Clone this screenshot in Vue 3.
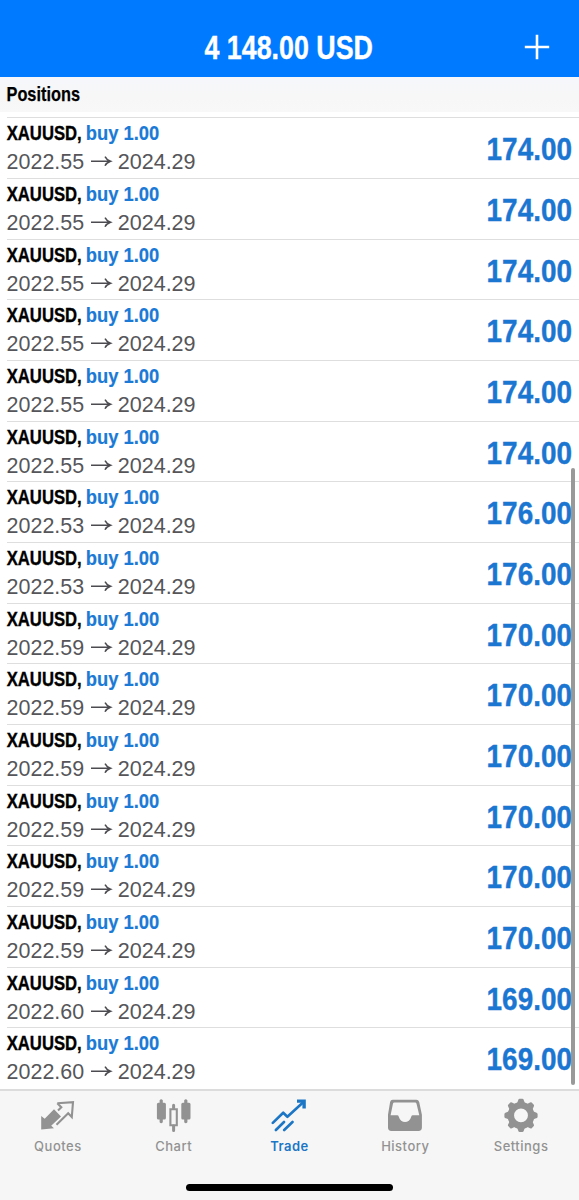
<script setup>
const entries = [
  ...Array(6).fill(['2022.55', '174.00']),
  ...Array(2).fill(['2022.53', '176.00']),
  ...Array(6).fill(['2022.59', '170.00']),
  ...Array(2).fill(['2022.60', '169.00']),
]
const positions = entries.map(([open, profit], id) => ({ id, open, profit, current: '2024.29' }))
</script>

<template>
  <div class="app">
    <header class="header">
      <svg class="title" width="579" height="77">
        <text x="204.5" y="59" textLength="168.5" lengthAdjust="spacingAndGlyphs">4 148.00 USD</text>
      </svg>
      <svg class="plus" width="26" height="26" viewBox="0 0 26 26">
        <path d="M13 .8V25.2M.8 13H25.2" />
      </svg>
    </header>
    <div class="section">
      <svg width="200" height="35">
        <text x="6.5" y="24.4" textLength="73.5" lengthAdjust="spacingAndGlyphs">Positions</text>
      </svg>
    </div>
    <main class="list">
      <div v-for="p in positions" :key="p.id" class="row">
        <svg class="info" width="220" height="59">
          <text class="symbol" transform="translate(-.3 22.3) scale(.794 1)">XAUUSD,</text>
          <text class="side" transform="translate(78.8 22.3) scale(.875 1)">buy 1.00</text>
          <text class="price" transform="translate(-.4 51) scale(.975 1)">{{ p.open }}</text>
          <path class="arrow" d="M84 43.2H103M98 38.6Q99.5 41.8 103.5 43.2Q99.5 44.6 98 47.8" />
          <text class="price" transform="translate(110.7 51) scale(.98 1)">{{ p.current }}</text>
        </svg>
        <svg class="profit" width="110" height="59">
          <text transform="translate(17.6 42.2) scale(.9 1)">{{ p.profit }}</text>
        </svg>
      </div>
      <div class="scrollbar"></div>
    </main>
    <nav class="tabs">
      <div class="tab">
        <svg width="36" height="36" viewBox="0 0 36 36">
          <path class="fill" d="M1.2 31.5V18L4.7 20.8L14 11.3L21 18.5L11.2 27.8L14 30.2Z" />
          <path class="line" d="M17.3 5.2L33 4.2L31.8 19L28.2 15.2L16.5 26.8M17.3 5.2L21.3 9.2L18 12.4" />
        </svg>
        <span>Quotes</span>
      </div>
      <div class="tab">
        <svg width="36" height="36" viewBox="0 0 36 36">
          <path class="fill" d="M.9 6.2Q.9 4.7 2.4 4.7H3.6V2.2Q5.2.4 6.8 2.2V4.7H8.4Q9.9 4.7 9.9 6.2V20Q9.9 21.5 8.4 21.5H6.8V24.3Q5.2 26.3 3.6 24.3V21.5H2.4Q.9 21.5 .9 20ZM25.3 6.2Q25.3 4.7 26.8 4.7H28.2V2.2Q29.8.4 31.4 2.2V4.7H33Q34.5 4.7 34.5 6.2V20Q34.5 21.5 33 21.5H31.4V24.3Q29.8 26.3 28.2 24.3V21.5H26.8Q25.3 21.5 25.3 20Z" />
          <path class="line" d="M14.4 11.3H20.8V27.2H14.4Z" />
          <path class="wick" d="M17.6 7.2V10M17.6 28V32.4" />
        </svg>
        <span>Chart</span>
      </div>
      <div class="tab active">
        <svg width="36" height="36" viewBox="0 0 36 36">
          <path class="trend" d="M1.8 24.9L12.2 14.7L16.4 18.8L32.2 4.2M4.9 32L13 24M13.2 32L21.5 24" />
          <path class="fill" d="M26 1.4H34.8V10.5H31.4V4.8H26Z" />
        </svg>
        <span>Trade</span>
      </div>
      <div class="tab">
        <svg width="36" height="36" viewBox="0 0 36 36">
          <path class="fill" fill-rule="evenodd" d="M5.7 1.8H29.3Q31.5 1.8 32.2 4.1L34.9 16.8V29.5Q34.9 32.9 31.5 32.9H4.4Q1 32.9 1 29.5V16.8L3.1 4.1Q3.6 1.8 5.7 1.8ZM7.4 4.6Q6.2 4.6 5.9 5.9L3.6 17.3H10.2Q11.4 17.3 11.8 18.7C13.5 25.8 22.6 25.8 24.2 18.7Q24.6 17.3 25.8 17.3H32.3L29.6 5.9Q29.3 4.6 28.1 4.6Z" />
        </svg>
        <span>History</span>
      </div>
      <div class="tab">
        <svg width="36" height="36" viewBox="0 0 36 36">
          <circle class="ring" cx="18" cy="17.4" r="10.2" />
          <g class="teeth">
            <path v-for="n in 8" :key="n" :transform="`rotate(${n * 45} 18 17.4)`" d="M12.8 6.2Q14.5 5.2 14.9 3Q15.4.8 16.5.8H19.5Q20.6.8 21.1 3Q21.5 5.2 23.2 6.2Z" />
          </g>
        </svg>
        <span>Settings</span>
      </div>
    </nav>
    <div class="home"></div>
  </div>
</template>

<style scoped>
.app {
  position: relative;
  width: 579px;
  height: 1200px;
  overflow: hidden;
  background: #fff;
  color: #000;
  font-family: "Liberation Sans", Arial, sans-serif;
}
svg { display: block; flex: none; }
.header { position: relative; height: 76.7px; background: #007aff; }
.title text { font-size: 33px; font-weight: 700; fill: #fff; stroke: #fff; stroke-width: .4px; }
.plus { position: absolute; left: 524px; top: 34px; fill: none; stroke: #fff; stroke-width: 2.6; }
.section { height: 35px; background: linear-gradient(#f6f7fb, #f7f7f7 60%, #f8f8f8); margin-bottom: 5.5px; }
.section text { font-size: 20.5px; font-weight: 700; stroke: #000; stroke-width: .25px; }
.list { position: relative; height: 972px; }
.row {
  display: flex;
  justify-content: space-between;
  box-sizing: border-box;
  height: 60.68px;
  margin-left: 7px;
  border-top: 1px solid #dedede;
}
.info { overflow: visible; }
.symbol, .side { font-size: 21px; font-weight: 700; }
.symbol { stroke: #000; stroke-width: .4px; }
.side { fill: #1b7ad6; stroke: #1b7ad6; stroke-width: .2px; }
.price { font-size: 22px; fill: #56565a; }
.arrow { fill: none; stroke: #4c4c50; stroke-width: 1.5; }
.profit text { font-size: 31px; font-weight: 700; fill: #1b76d2; stroke: #1b76d2; stroke-width: .4px; }
.scrollbar { position: absolute; left: 571px; top: 351px; width: 4px; height: 617px; border-radius: 2px; background: #999; }
.tabs {
  display: grid;
  grid-template-columns: repeat(5, 115.8px);
  box-sizing: border-box;
  height: 111px;
  padding-top: 7px;
  border-top: 2px solid #dcdcdc;
  background: #f6f6f6;
}
.tab {
  display: flex;
  flex-direction: column;
  align-items: center;
  gap: 4px;
  color: #929292;
  font: 500 13px/16px Inter, sans-serif;
  letter-spacing: .5px;
}
.active { color: #1b76c6; font-weight: 600; }
.fill, .teeth { fill: currentColor; }
.line, .wick, .trend, .ring { fill: none; stroke: currentColor; }
.line { stroke-width: 2.1; }
.wick { stroke-width: 3; stroke-linecap: round; }
.trend { stroke-width: 2.6; stroke-linecap: round; stroke-linejoin: round; }
.ring { stroke-width: 6.5; }
.home { position: absolute; left: 186px; top: 1184px; width: 207px; height: 7px; border-radius: 4px; background: #000; }
</style>

<style>
body { margin: 0; }
</style>
